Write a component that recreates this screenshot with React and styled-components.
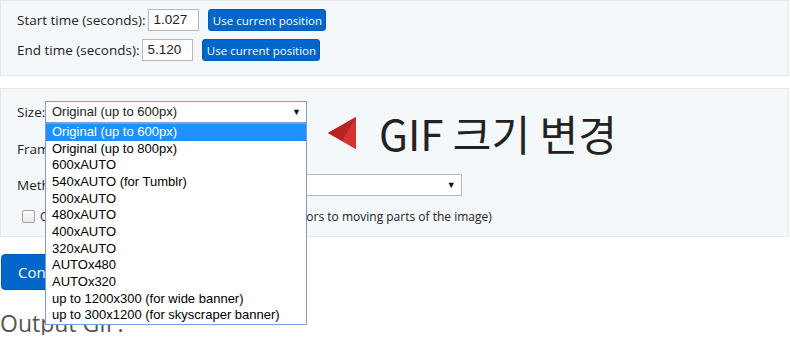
import React from "react";
import styled, { createGlobalStyle } from "styled-components";

const Global = createGlobalStyle`
  html, body { margin: 0; padding: 0; background: #fff; }
  body { font-family: "Open Sans", "Noto Sans", sans-serif; color: #222; }
`;

const Page = styled.div`
  width: 789px;
`;

const Well = styled.div`
  box-sizing: border-box;
  background: #f5f8fb;
  border: 1px solid #e3e8ec;
  padding: ${(p) => p.$pad || "8px 16px"};
  height: ${(p) => (p.$h ? `${p.$h}px` : "auto")};
  margin-bottom: ${(p) => p.$mb || 0}px;
  display: flex;
  flex-direction: column;
  gap: ${(p) => p.$gap || 0}px;
  position: relative;
`;

const Row = styled.div`
  display: flex;
  align-items: center;
  height: ${(p) => p.$h || 22}px;
  font-size: 13.5px;
  position: relative;
`;

const Label = styled.span`
  margin-right: ${(p) => p.$mr ?? 3}px;
  white-space: nowrap;
  ${(p) => (p.$w ? `width: ${p.$w}px; flex: none;` : "")}
`;

const TextInput = styled.div`
  box-sizing: border-box;
  width: 51px;
  height: 22px;
  border: 1px solid #b9b9b9;
  background: #fff;
  font-family: "Liberation Sans", Arial, sans-serif;
  font-size: 13.5px;
  line-height: 20px;
  padding-left: 4px;
  overflow: hidden;
  white-space: nowrap;
  margin-right: 9px;
`;

const Btn = styled.button`
  box-sizing: border-box;
  width: 118px;
  height: 22px;
  border: 1px solid #005bb5;
  border-radius: 3px;
  background: #0066cc;
  color: #fff;
  font-family: "Open Sans", sans-serif;
  font-size: 11.5px;
  padding: 0;
  cursor: pointer;
`;

const SelectBox = styled.div`
  box-sizing: border-box;
  flex: none;
  width: ${(p) => p.$w}px;
  height: 22px;
  border: 1px solid ${(p) => (p.$focus ? "#7ba2dc" : "#b9b9b9")};
  background: #fff;
  font-family: "Liberation Sans", Arial, sans-serif;
  font-size: 13px;
  line-height: 20px;
  padding-left: 6px;
  display: flex;
  justify-content: space-between;
  align-items: center;
  position: relative;
`;

const Arrow = styled.span`
  font-size: 9px;
  margin-right: 5px;
  color: #111;
`;

const DropList = styled.ul`
  position: absolute;
  left: 28px;
  top: 22px;
  box-sizing: border-box;
  width: 262px;
  margin: 0;
  padding: 0;
  list-style: none;
  background: #fff;
  border: 1px solid #7b9ed6;
  z-index: 10;
  font-family: "Liberation Sans", Arial, sans-serif;
  font-size: 13px;
`;

const Item = styled.li`
  height: 16.67px;
  line-height: 16.67px;
  padding-left: 6px;
  white-space: nowrap;
  background: ${(p) => (p.$active ? "#1e90ff" : "#fff")};
  color: ${(p) => (p.$active ? "#fff" : "#000")};
`;

const Checkbox = styled.span`
  box-sizing: border-box;
  width: 13px;
  height: 13px;
  border: 1px solid #a0a0a0;
  border-radius: 2px;
  background: linear-gradient(#fdfdfd, #e9e9e9);
  margin: 0 5px 0 5px;
`;

const CheckText = styled.span`
  font-size: 12px;
  white-space: nowrap;
`;

const Note = styled.div`
  position: absolute;
  left: 327px;
  top: 24px;
  display: flex;
  align-items: center;
  gap: 22px;
`;

const NoteText = styled.span`
  font-family: "Noto Sans CJK KR", sans-serif;
  font-size: 42px;
  font-weight: 400;
  color: #222;
  line-height: 40px;
`;

const BigBtn = styled.button`
  box-sizing: border-box;
  height: 36px;
  margin-left: 1px;
  padding: 0 16px;
  border: 1px solid #005bb5;
  border-radius: 4px;
  background: #0066cc;
  color: #fff;
  font-family: "Open Sans", sans-serif;
  font-size: 15px;
`;

const Heading = styled.h2`
  margin: 22px 0 0 0;
  font-family: "Open Sans", sans-serif;
  font-weight: 400;
  font-size: 23px;
  color: #555;
  line-height: 1;
`;

const Spacer = styled.div`
  height: 17px;
`;

const sizes = [
  "Original (up to 600px)",
  "Original (up to 800px)",
  "600xAUTO",
  "540xAUTO (for Tumblr)",
  "500xAUTO",
  "480xAUTO",
  "400xAUTO",
  "320xAUTO",
  "AUTOx480",
  "AUTOx320",
  "up to 1200x300 (for wide banner)",
  "up to 300x1200 (for skyscraper banner)",
];

const Triangle = () => (
  <svg width="29" height="32" viewBox="0 0 29 32">
    <polygon points="28,0 0,16 28,32" fill="#d02b2b" />
    <polygon points="28,0 0,16 14,24" fill="#b82222" />
    <polygon points="28,0 14,24 28,32" fill="#d93030" />
  </svg>
);

export default function App() {
  return (
    <Page>
      <Global />
      <Well $h={76} $pad="8px 16px" $gap={8} $mb={12}>
        <Row>
          <Label>Start time (seconds):</Label>
          <TextInput>1.027</TextInput>
          <Btn>Use current position</Btn>
        </Row>
        <Row>
          <Label>End time (seconds):</Label>
          <TextInput>5.120</TextInput>
          <Btn>Use current position</Btn>
        </Row>
      </Well>
      <Well $pad="12px 16px 0 16px" $gap={0}>
        <Row>
          <Label $mr={0} $w={28}>Size:</Label>
          <SelectBox $w={262} $focus>
            <span>Original (up to 600px)</span>
            <Arrow>▼</Arrow>
          </SelectBox>
          <DropList>
            {sizes.map((s, i) => (
              <Item key={s} $active={i === 0}>
                {s}
              </Item>
            ))}
          </DropList>
        </Row>
        <Row $h={51}>
          <Label>Frame rate (FPS):</Label>
          <SelectBox $w={60}>
            <span>20</span>
            <Arrow>▼</Arrow>
          </SelectBox>
        </Row>
        <Row>
          <Label>Method:</Label>
          <SelectBox $w={389}>
            <span>Gifski (better quality)</span>
            <Arrow>▼</Arrow>
          </SelectBox>
        </Row>
        <Row $h={40}>
          <Checkbox />
          <CheckText>
            Optimize for static background (assign more colors to moving parts
            of the image)
          </CheckText>
        </Row>
        <Note>
          <Triangle />
          <NoteText>GIF 크기 변경</NoteText>
        </Note>
      </Well>
      <Spacer />
      <BigBtn>Convert to GIF!</BigBtn>
      <Heading>Output GIF:</Heading>
    </Page>
  );
}
